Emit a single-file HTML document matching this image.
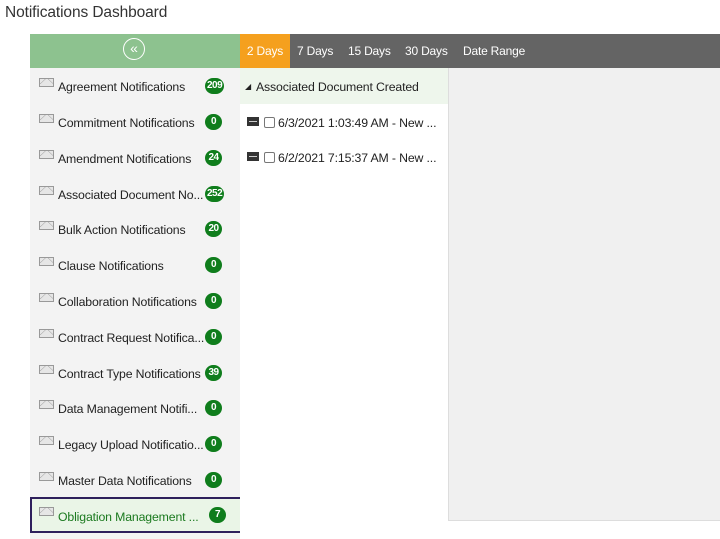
<!DOCTYPE html>
<html><head><meta charset="utf-8"><style>
*{margin:0;padding:0;box-sizing:border-box}
body{width:720px;height:539px;background:#fff;font-family:"Liberation Sans",sans-serif;position:relative;overflow:hidden;color:#222}
.title{position:absolute;left:5px;top:4px;font-size:15.5px;color:#333;letter-spacing:-0.1px}
.hdr{position:absolute;left:30px;top:34px;width:210px;height:34px;background:#8dc28f}
.circ{position:absolute;left:123px;top:38px;width:22px;height:22px;border:1.5px solid #fff;border-radius:50%;color:#fff;font-size:14px;line-height:18px;text-align:center}
.bar{position:absolute;left:240px;top:34px;width:480px;height:34px;background:#646464}
.tab{position:absolute;top:34px;height:34px;line-height:34px;color:#fff;font-size:12px;letter-spacing:-0.2px}
.side{position:absolute;left:30px;top:68px;width:210px;height:471px;background:#f3f3f3}
.row{position:absolute;left:30px;width:210px;height:36px}
.env{position:absolute;left:9px;top:9px;width:15px;height:9px;border:1px solid #999;background:#e6e6e6}
.env:before{content:"";position:absolute;left:0;top:-1px;width:13px;height:6px;background:linear-gradient(to bottom right,transparent 45%,#999 50%,transparent 55%),linear-gradient(to bottom left,transparent 45%,#999 50%,transparent 55%);background-size:50% 100%;background-repeat:no-repeat;background-position:left,right}
.lbl{position:absolute;left:28px;top:11px;font-size:12.3px;color:#222;white-space:nowrap;letter-spacing:-0.15px}
.bdg{position:absolute;left:175px;top:9px;min-width:17px;height:16px;border-radius:8px;background:#0f7d1c;color:#fff;font-size:10px;font-weight:bold;text-align:center;line-height:16px;padding:0 2px;letter-spacing:-0.5px}
.sel{border:2px solid #2e1f5c;background:#eaf5e7;width:219px}
.mid{position:absolute;left:240px;top:68px;width:208px;height:471px;background:#fff}
.mh{position:absolute;left:240px;top:68px;width:208px;height:36px;background:#eef6ec;font-size:12.3px;line-height:38px;padding-left:16px;letter-spacing:-0.15px}
.it{position:absolute;left:247px;font-size:12.3px;white-space:nowrap;letter-spacing:-0.15px}
.ic{display:inline-block;width:12px;height:9px;background:#333;border:1px solid #333;vertical-align:1px;position:relative}
.ic:after{content:"";position:absolute;left:1px;top:3px;width:8px;height:1px;background:#ccc}
.cb{display:inline-block;width:11px;height:11px;border:1px solid #777;border-radius:2px;background:#fff;margin:0 3px 0 5px;vertical-align:-1px}
.right{position:absolute;left:448px;top:68px;width:272px;height:453px;background:#f0f0f0;border-left:1px solid #ddd;border-bottom:1px solid #ddd}
</style></head><body>
<div class="title">Notifications Dashboard</div>
<div class="hdr"></div>
<div class="circ">«</div>
<div class="bar"></div>
<div class="tab" style="left:240px;width:50px;background:#f5a01e;text-align:center">2 Days</div>
<div class="tab" style="left:297px">7 Days</div>
<div class="tab" style="left:348px">15 Days</div>
<div class="tab" style="left:405px">30 Days</div>
<div class="tab" style="left:463px">Date Range</div>
<div class="side"></div>
<div class="row" style="top:69px"><div class="env"></div><div class="lbl">Agreement Notifications</div><div class="bdg">209</div></div>
<div class="row" style="top:105px"><div class="env"></div><div class="lbl">Commitment Notifications</div><div class="bdg">0</div></div>
<div class="row" style="top:141px"><div class="env"></div><div class="lbl">Amendment Notifications</div><div class="bdg">24</div></div>
<div class="row" style="top:177px"><div class="env"></div><div class="lbl">Associated Document No...</div><div class="bdg">252</div></div>
<div class="row" style="top:212px"><div class="env"></div><div class="lbl">Bulk Action Notifications</div><div class="bdg">20</div></div>
<div class="row" style="top:248px"><div class="env"></div><div class="lbl">Clause Notifications</div><div class="bdg">0</div></div>
<div class="row" style="top:284px"><div class="env"></div><div class="lbl">Collaboration Notifications</div><div class="bdg">0</div></div>
<div class="row" style="top:320px"><div class="env"></div><div class="lbl">Contract Request Notifica...</div><div class="bdg">0</div></div>
<div class="row" style="top:356px"><div class="env"></div><div class="lbl">Contract Type Notifications</div><div class="bdg">39</div></div>
<div class="row" style="top:391px"><div class="env"></div><div class="lbl">Data Management Notifi...</div><div class="bdg">0</div></div>
<div class="row" style="top:427px"><div class="env"></div><div class="lbl">Legacy Upload Notificatio...</div><div class="bdg">0</div></div>
<div class="row" style="top:463px"><div class="env"></div><div class="lbl">Master Data Notifications</div><div class="bdg">0</div></div>
<div class="row sel" style="top:497px"><div class="env" style="left:7px;top:8px"></div><div class="lbl" style="left:26px;top:11px;color:#1b7a1f">Obligation Management ...</div><div class="bdg" style="left:177px;top:8px">7</div></div>
<div class="mid"></div>
<div class="mh"><span style="position:absolute;left:5px;top:0;font-size:8px">◢</span>Associated Document Created</div>
<div class="it" style="top:116px"><span class="ic"></span><span class="cb"></span>6/3/2021 1:03:49 AM - New ...</div>
<div class="it" style="top:151px"><span class="ic"></span><span class="cb"></span>6/2/2021 7:15:37 AM - New ...</div>
<div class="right"></div>
</body></html>
